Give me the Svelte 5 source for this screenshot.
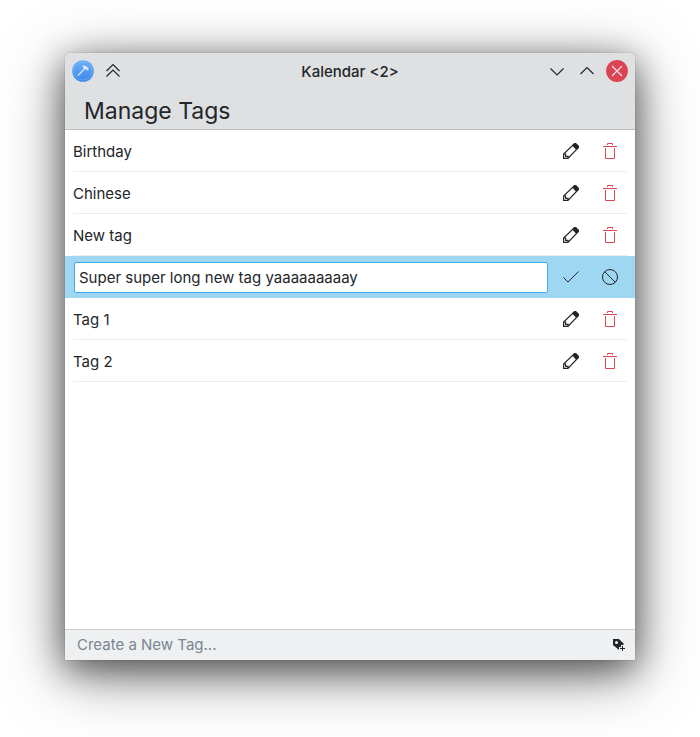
<script>
    let tags = $state(["Birthday", "Chinese", "New tag", "Super super long new tag yaaaaaaaaay", "Tag 1", "Tag 2"]);
    let editing = $state(3);
    let draft = $state("Super super long new tag yaaaaaaaaay");
    let newTag = $state("");

    function startEdit(index) {
        editing = index;
        draft = tags[index];
    }

    function saveEdit() {
        if (draft) tags[editing] = draft;
        editing = -1;
    }

    function removeTag(index) {
        tags.splice(index, 1);
        if (editing > index) editing -= 1;
    }

    function addTag(event) {
        event.preventDefault();
        if (!newTag) return;
        tags.push(newTag);
        newTag = "";
    }
</script>

<main>
    <section class="window">
        <header>
            <div class="titlebar">
                <div class="group">
                    <button type="button" aria-label="Window menu">
                        <svg width="22" height="22" viewBox="0 0 22 22">
                            <defs>
                                <linearGradient id="disc" x1="0" y1="0" x2="0" y2="1">
                                    <stop offset="0" stop-color="#6cb0f8" />
                                    <stop offset="1" stop-color="#3b87ea" />
                                </linearGradient>
                            </defs>
                            <circle cx="11" cy="11" r="10.8" fill="url(#disc)" />
                            <circle cx="11" cy="11" r="9" fill="none" stroke="#7db8f8" stroke-width=".6" />
                            <path d="M5.8 15.8 13 8.3" stroke="#c5dcf6" stroke-width="1.6" />
                            <path d="M10 5.8q2.6-1 4.5.6l2.5 2.4-1.4 1.7-1.5-1.2-1.3.2-1.6-1.7.2-1z" fill="#dceafa" />
                        </svg>
                    </button>
                    <button type="button" aria-label="Shade">
                        <svg class="line bold" width="22" height="22" viewBox="0 0 22 22">
                            <path d="m4.5 11 6.5-6.5 6.5 6.5M4.5 16.5l6.5-6.5 6.5 6.5" />
                        </svg>
                    </button>
                </div>
                <span class="title">Kalendar &lt;2&gt;</span>
                <div class="group end">
                    <button type="button" aria-label="Minimize">
                        <svg class="line bold" width="22" height="22" viewBox="0 0 22 22">
                            <path d="m4.5 8.5 6.5 6.500 6.5-6.5" />
                        </svg>
                    </button>
                    <button type="button" aria-label="Maximize">
                        <svg class="line bold" width="22" height="22" viewBox="0 0 22 22">
                            <path d="m4.5 14 6.5-6.5 6.5 6.5" />
                        </svg>
                    </button>
                    <button type="button" aria-label="Close">
                        <svg width="22" height="22" viewBox="0 0 22 22">
                            <circle cx="11" cy="11" r="10.9" fill="#da4453" />
                            <path d="m6 6 10 10M16 6 6 16" stroke="#f4e4e7" stroke-width="1.2" />
                        </svg>
                    </button>
                </div>
            </div>
            <h1>Manage Tags</h1>
        </header>

        <ul>
            {#each tags as tag, i}
                <li class:active={editing === i}>
                    <div class="row">
                        {#if editing === i}
                            <input class="edit" type="text" aria-label="Tag name" bind:value={draft}>
                            <button type="button" aria-label="Save" onclick={saveEdit}>
                                <svg class="line" width="16" height="16" viewBox="0 0 16 16">
                                    <path d="M.5 8.5 5 13 15.5 2.5" />
                                </svg>
                            </button>
                            <button type="button" aria-label="Cancel" onclick={() => editing = -1}>
                                <svg class="line" width="16" height="16" viewBox="0 0 16 16">
                                    <circle cx="8" cy="8" r="7.5" />
                                    <path d="m2.7 2.7 10.6 10.6" />
                                </svg>
                            </button>
                        {:else}
                            <span class="name">{tag}</span>
                            <button type="button" aria-label="Edit {tag}" onclick={() => startEdit(i)}>
                                <svg class="line bold" width="16" height="16" viewBox="0 0 16 16">
                                    <path d="M.6 15.4v-4.4L11.500.6h1L15.4 3.5v1L5 15.4zM.6 11h2v2.4H5v2" />
                                    <path class="solid" d="M11.700 0h1.100L16 3.200v1.100l-2.600 2.600-4.300-4.300z" />
                                </svg>
                            </button>
                            <button type="button" aria-label="Delete {tag}" onclick={() => removeTag(i)}>
                                <svg class="line red" width="16" height="16" viewBox="0 0 16 16">
                                    <path d="M5.5 2V.5h5V2M1 3.5h14M3.5 5v10.5h9V5" />
                                </svg>
                            </button>
                        {/if}
                    </div>
                </li>
            {/each}
        </ul>

        <form onsubmit={addTag}>
            <input type="text" aria-label="New tag name" placeholder="Create a New Tag..." bind:value={newTag}>
            <button type="submit" aria-label="Add tag">
                <svg width="12" height="12" viewBox="0 0 12 12">
                    <path fill="#232629" fill-rule="evenodd" d="M0 0h6l5 5-1 1H8v2H6v3L0 6zM2 3.5a1.500 1.500 0 1 0 3 0 1.500 1.500 0 1 0-3 0z" />
                    <path d="M9.5 7v5M7 9.5h5" stroke="#232629" />
                </svg>
            </button>
        </form>
    </section>
</main>

<style>
    :global(body) {
        background: white;
        margin: 0;
    }

    main {
        box-sizing: border-box;
        color: #232629;
        display: flex;
        font: 15px/20px Inter, "Noto Sans", sans-serif;
        min-height: 100vh;
        padding: 53px 65px 77px;
    }

    .window {
        background: white;
        border-radius: 5px 5px 0 0;
        box-shadow: 0 0 1px rgba(0, 0, 0, 0.5),
                    0 14px 60px rgba(0, 0, 0, 0.5),
                    0 8px 32px rgba(0, 0, 0, 0.45);
        display: flex;
        flex: 1;
        flex-direction: column;
        min-width: 0;
    }

    header {
        background: #dee0e2;
        border-bottom: 1px solid #bcc0c4;
        border-radius: 5px 5px 0 0;
    }

    .titlebar {
        align-items: center;
        display: grid;
        grid-template-columns: 1fr auto 1fr;
        padding: 7px;
    }

    .group {
        display: flex;
        gap: 8px;
    }

    .end {
        justify-content: flex-end;
    }

    .title {
        font-weight: 500;
        padding-top: 2px;
    }

    h1 {
        font-size: 23px;
        font-weight: 400;
        line-height: 32px;
        margin: 0;
        padding: 6px 19px 2px;
    }

    button {
        align-items: center;
        background: none;
        border: none;
        display: flex;
        justify-content: center;
        padding: 0;
    }

    svg {
        display: block;
    }

    .line {
        fill: none;
        stroke: #232629;
        stroke-width: 1;
    }

    .bold {
        stroke-width: 1.2;
    }

    .red {
        stroke: #da4453;
    }

    .solid {
        fill: #232629;
        stroke: none;
    }

    ul {
        flex: 1;
        list-style: none;
        margin: 0;
        padding: 0;
    }

    li {
        padding: 0 8px;
    }

    .row {
        align-items: center;
        border-bottom: 1px solid #eeeeef;
        box-sizing: border-box;
        display: flex;
        gap: 5px;
        height: 42px;
        padding-top: 1px;
    }

    .row button {
        height: 32px;
        width: 34px;
    }

    .active {
        background: #9fd7f3;
    }

    .active .row {
        border-color: transparent;
    }

    .name {
        flex: 1;
        padding-top: 2px;
    }

    input {
        color: inherit;
        flex: 1;
        font: inherit;
        min-width: 0;
        outline: none;
    }

    .edit {
        background: white;
        border: 1px solid #3daee9;
        border-radius: 2px;
        box-sizing: border-box;
        height: 31px;
        margin: 1px 1px 0;
        padding: 0 4px;
    }

    form {
        background: #eff0f1;
        border-top: 1px solid #c8cacc;
        display: flex;
        height: 30px;
        padding: 0 10px 0 12px;
    }

    form input {
        background: none;
        border: none;
        padding: 0;
    }

    form input::placeholder {
        color: #7a8591;
        opacity: 1;
    }
</style>
